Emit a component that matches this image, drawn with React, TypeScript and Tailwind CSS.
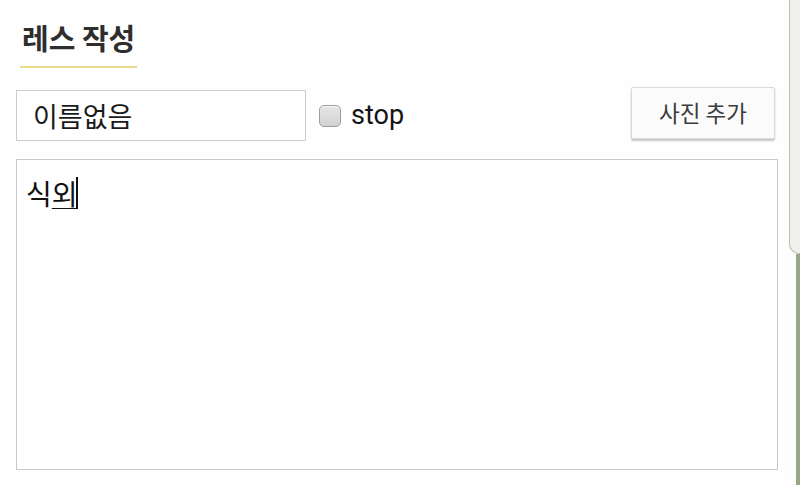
import React from "react";

const ko = { fontFamily: '"Noto Sans CJK KR", "Noto Sans", sans-serif' };
const roboto = { fontFamily: 'Roboto, "Noto Sans CJK KR", sans-serif' };

export default function App() {
  return (
    <div className="flex w-[800px] h-[485px] bg-[#fefefe] overflow-hidden">
      {/* form column */}
      <div className="flex flex-col w-[789px] pl-[16px]">
        <div className="pl-[4px] pt-[17px]">
          <div className="inline-block pb-[8px] border-b-2 border-[#e9dd8c] px-[2px]">
            <h1
              className="text-[29px] leading-[41px] font-bold text-[#2e2e2e]"
              style={ko}
            >
              레스 작성
            </h1>
          </div>
        </div>

        <div className="flex items-start mt-[19px]">
          <div className="mt-[3px] w-[290px] h-[51px] border border-[#cdcdcd] bg-white flex items-center pl-[16px]">
            <span className="text-[27px] text-[#1a1a1a] leading-none" style={ko}>
              이름없음
            </span>
          </div>
          <label className="flex items-center mt-[3px] h-[51px] ml-[13px]">
            <span className="w-[22px] h-[22px] rounded-[5px] border border-[#9c9c9c] bg-gradient-to-b from-[#e6e6e6] to-[#d2d2d2] shadow-[inset_0_1px_1px_rgba(255,255,255,0.8)]" />
            <span className="ml-[10px] text-[27px] text-[#141414] leading-none" style={roboto}>
              stop
            </span>
          </label>
          <button
            className="ml-auto mr-[14px] w-[144px] h-[52px] border border-[#dadada] rounded-[2px] bg-[#fbfbfb] shadow-[0_2px_2px_rgba(0,0,0,0.22)] text-[22.5px] text-[#3c3c3c]"
            style={ko}
          >
            사진 추가
          </button>
        </div>

        <div className="mt-[18px] w-[762px] h-[311px] border border-[#c9c9c9] bg-white pl-[9px] pt-[16px]">
          <div className="flex items-center text-[28px] leading-[34px] text-[#111]" style={ko}>
            <span>식</span>
            <span className="underline decoration-1 underline-offset-[3px]">외</span>
            <span className="w-[2px] h-[32px] bg-[#111] -ml-[2px]" />
          </div>
        </div>
      </div>

      {/* edge of the neighbouring panel */}
      <div className="flex flex-col w-[11px]">
        <div className="h-[254px] border-l border-b border-[#b9b9b6] rounded-bl-[10px] bg-[#f0f0ec]" />
        <div className="flex flex-1">
          <div className="w-[7px] bg-[#fdfdfb]" />
          <div className="flex-1 bg-[#97a786]" />
        </div>
      </div>
    </div>
  );
}
